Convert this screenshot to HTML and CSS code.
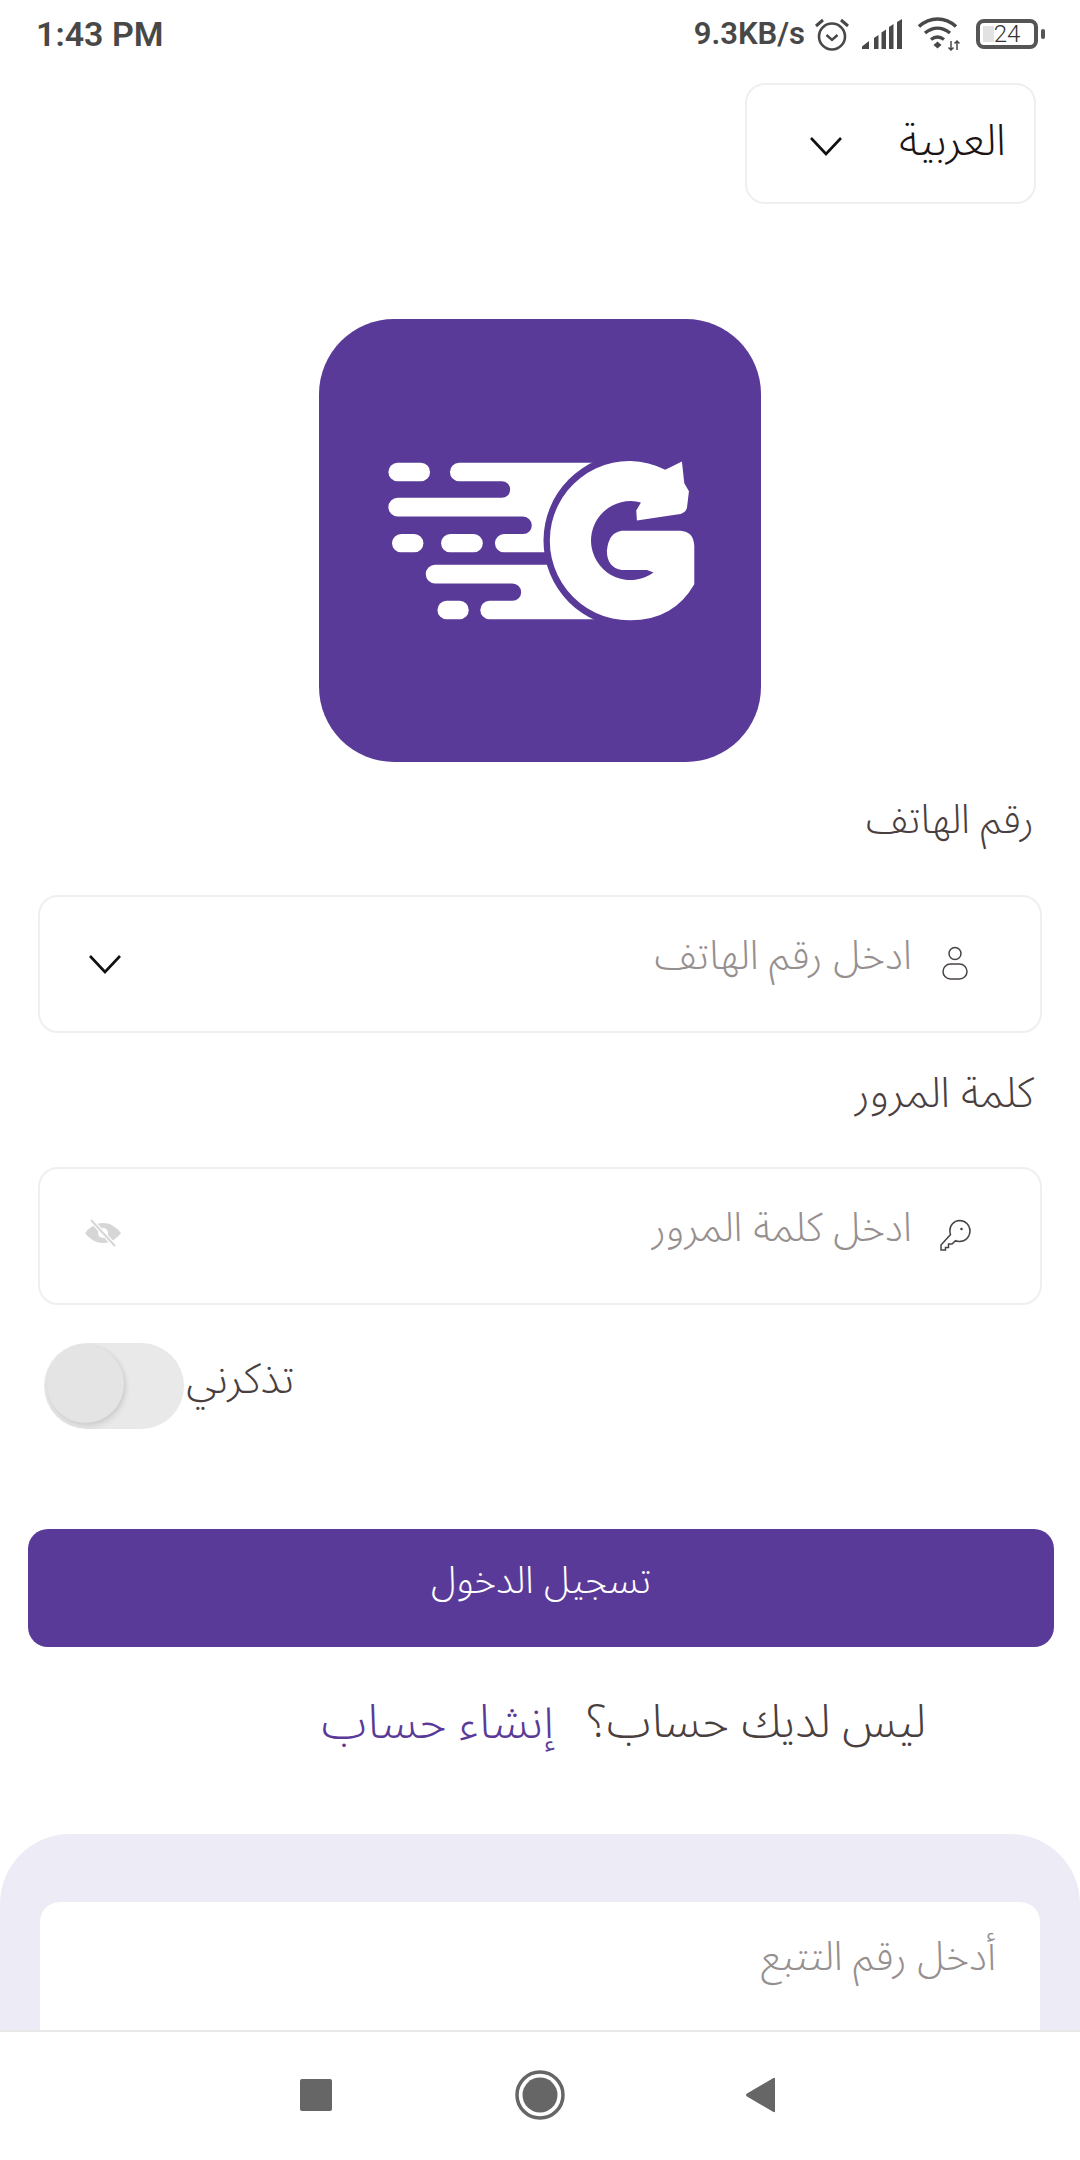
FILE: index.html
```html
<!DOCTYPE html>
<html lang="ar">
<head>
<meta charset="utf-8">
<title>تسجيل الدخول</title>
<link rel="stylesheet" href="styles.css">
</head>
<body>
<div class="screen">
  <header class="status">
    <span class="time">1:43 PM</span>
    <div class="status-right">
      <span class="speed">9.3KB/s</span>
      <svg class="ic-alarm" viewBox="0 0 36 34" fill="none" stroke="#484848"><circle cx="18" cy="19.500" r="13" stroke-width="2.600"/><path d="M12.500 18l5.500 5 5.500-5" stroke-width="2.400"/><path d="M2 9l7-6M34 9l-7-6" stroke-width="3"/></svg>
      <svg class="ic-signal" viewBox="0 0 40 30" fill="#484848"><path d="M0 30v-2.500l7-5.500v8zM12 30V19l4.500-3v14zM19.500 30V13.500l4.500-3V30zM27 30V8l4.500-3v25zM35 30V3l5-3v30z"/></svg>
      <svg class="ic-wifi" viewBox="0 0 42 34" fill="none" stroke="#484848" stroke-width="3.400"><path d="M1 9.500c11-10 26-10 37 0M7 16c8-6.500 17-6.500 25 0M13 22.500c4-3 9-3 13 0"/><path d="M15.500 28l4-3.500 4 3.500-4 3.500z" fill="#484848" stroke="none"/><path d="M33 24v9M30.500 30.500l2.500 2.500 2.500-2.500M39 33v-9M36.500 26.500l2.500-2.500 2.500 2.500" stroke-width="1.500"/></svg>
      <div class="battery"><span class="battery-box"><span class="battery-fill"></span><span class="battery-num">24</span></span><span class="battery-nub"></span></div>
    </div>
  </header>

  <main class="content">
    <div class="lang-row">
      <div class="lang-select">
        <span class="lang-name">العربية</span>
        <svg class="chev chev-lang" viewBox="0 0 34 20"><path d="M2 2l15 16L32 2"/></svg>
      </div>
    </div>

    <div class="logo-row">
      <svg class="logo" viewBox="57 57 1325 1325" preserveAspectRatio="none">
        <rect x="57" y="57" width="1325" height="1325" rx="225" fill="#5a3a98"/>
        <g fill="#fff">
          <rect x="265" y="487" width="125" height="55" rx="27.500"/>
          <rect x="276" y="700" width="94" height="55" rx="27.500"/>
          <rect x="423" y="700" width="125" height="55" rx="27.500"/>
          <rect x="412" y="900" width="94" height="55" rx="27.500"/>
          <path d="M477 487H900V955H568a27.500 27.500 0 0 1 0-55H637a26 26 0 0 0 0-52H405a28 28 0 0 1 0-56H760V755H612a27.500 27.500 0 0 1 0-55H669a26 26 0 0 0 0-52H293a28 28 0 0 1 0-56H605a25 25 0 0 0 0-50H477a27.500 27.500 0 0 1 0-55z"/>
        </g>
        <circle cx="990" cy="720" r="260" fill="#5a3a98"/>
        <path fill="#fff" d="M1182 735V850Q1120 958 990 958A238 238 0 1 1 1095 508L1145 483L1152 548L1166 572L1160 622Q1155 640 1130 642L1010 660L1008 630L1022 606A118 118 0 1 0 1060 815L1040 808H965Q920 800 920 750Q925 695 965 690H1140Q1180 692 1182 735Z"/>
      </svg>
    </div>

    <label class="label">رقم الهاتف</label>
    <div class="field">
      <svg class="field-icon icon-up" viewBox="0 0 28 34" fill="none" stroke="#4a4343" stroke-width="1.500"><circle cx="14" cy="7.500" r="6"/><rect x="2" y="18" width="24" height="15" rx="7.500"/></svg>
      <span class="placeholder">ادخل رقم الهاتف</span>
      <svg class="chev chev-field" viewBox="0 0 34 20"><path d="M2 2l15 16L32 2"/></svg>
    </div>

    <label class="label label-wide">كلمة المرور</label>
    <div class="field">
      <svg class="field-icon icon-up icon-key" viewBox="0 0 32 32" fill="none" stroke="#4a4343" stroke-width="1.500"><path d="M20 1.500a10.500 10.500 0 0 1 0 21c-1.500 0-3-.3-4-.9L12.500 25H9v3.500H6V31H1.500v-5L11 15.500c-.4-1-.6-2.300-.6-3.500A10 10 0 0 1 20 1.500z"/><circle cx="22" cy="10" r="1.300" fill="#4a4343" stroke="none"/></svg>
      <span class="placeholder">ادخل كلمة المرور</span>
      <svg class="eye" viewBox="0 0 36 28"><path d="M18 4C10 4 4 9 0 14c4 5 10 10 18 10s14-5 18-10c-4-5-10-10-18-10z" fill="#d6d6d6"/><circle cx="18" cy="14" r="5" fill="#fff"/><path d="M6 1l24 26" stroke="#fff" stroke-width="4.500"/><path d="M6 1l24 26" stroke="#d6d6d6" stroke-width="2"/></svg>
    </div>

    <div class="remember">
      <div class="toggle"><span class="knob"></span></div>
      <span class="remember-text">تذكرني</span>
    </div>

    <button class="login" type="button">تسجيل الدخول</button>

    <div class="signup">
      <span class="signup-q">ليس لديك حساب؟</span>
      <a class="signup-link">إنشاء حساب</a>
    </div>

    <section class="track">
      <div class="track-card"><span class="placeholder">أدخل رقم التتبع</span></div>
    </section>
  </main>

  <nav class="navbar">
    <span class="nav-square"></span>
    <svg class="nav-circle" viewBox="0 0 50 50"><circle cx="25" cy="25" r="23" fill="none" stroke="#666" stroke-width="3.500"/><circle cx="25" cy="25" r="17.500" fill="#666"/></svg>
    <svg class="nav-back" viewBox="0 0 32 36"><path d="M30 2v32q0 2-2 .8L2 19.500q-2-1.500 0-3L28 1.200q2-1.200 2 .8z" fill="#666"/></svg>
  </nav>
</div>
</body>
</html>
```

FILE: styles.css
```css
* { box-sizing: border-box; }
html, body { margin: 0; padding: 0; background: #fff; }
body { font-family: "Noto Sans Arabic", "Noto Sans", "DejaVu Sans", sans-serif; }
.screen { width: 1080px; height: 2160px; display: flex; flex-direction: column; overflow: hidden; }

.status { height: 83px; flex: none; display: flex; align-items: flex-start; justify-content: space-between; padding: 13px 35px 0 36px; color: #484848; font-family: Roboto, sans-serif; font-weight: 600; }
.time { font-size: 34px; line-height: 42px; }
.status-right { display: flex; align-items: center; height: 42px; }
.speed { font-size: 31px; line-height: 42px; }
.ic-alarm { width: 36px; height: 34px; margin-left: 9px; }
.ic-signal { width: 40px; height: 30px; margin-left: 12px; }
.ic-wifi { width: 42px; height: 34px; margin-left: 16px; }
.battery { display: flex; align-items: center; margin-left: 16px; }
.battery-box { position: relative; width: 62px; height: 30px; border: 4px solid #555; border-radius: 8px; display: flex; align-items: center; justify-content: center; }
.battery-fill { position: absolute; left: 3px; top: 3px; bottom: 3px; width: 11px; background: #e2e2e2; }
.battery-num { position: relative; font-size: 24px; font-weight: 300; color: #333; }
.battery-nub { width: 4px; height: 10px; margin-left: 3px; background: #555; border-radius: 2px; }

.content { flex: 1; min-height: 0; overflow: hidden; display: flex; flex-direction: column; }
.chev { fill: none; stroke: #111; stroke-width: 2.600; }
.lang-row { display: flex; justify-content: flex-end; padding-right: 44px; }
.lang-select { width: 291px; height: 121px; border: 2px solid #efefef; border-radius: 20px; display: flex; align-items: center; justify-content: space-between; padding: 0 28px 0 62px; flex-direction: row-reverse; }
.lang-name { font-size: 44px; font-weight: 300; color: #1c1414; line-height: 1; margin-top: -5px; }
.chev-lang { width: 34px; height: 20px; margin-top: 5px; }
.logo-row { display: flex; justify-content: center; margin-top: 115px; }
.logo { width: 442px; height: 443px; display: block; }

.label { display: flex; align-items: center; justify-content: flex-end; height: 133px; padding: 0 46px 16px 0; font-size: 40px; color: #4a3f3f; font-weight: 300; }
.label-wide { font-size: 42px; height: 134px; padding-bottom: 14px; }
.field { height: 138px; margin: 0 38px; border: 2px solid #efefef; border-radius: 20px; display: flex; flex-direction: row-reverse; align-items: center; padding: 0 70px 0 48px; position: relative; }
.field-icon { width: 30px; height: 34px; margin-left: 28px; }
.icon-up { margin-top: -3px; }
.icon-key { width: 33px; height: 32px; margin-right: -2px; margin-left: 27px; }
.placeholder { font-size: 40px; line-height: 1.2; color: #968f8f; font-weight: 300; margin-top: -15px; }
.chev-field { width: 34px; height: 20px; margin-right: auto; margin-top: -1px; }
.eye { width: 36px; height: 28px; margin-right: auto; margin-left: -3px; margin-top: -6px; }

.remember { display: flex; align-items: center; height: 86px; margin-top: 38px; padding-left: 44px; }
.toggle { width: 140px; height: 86px; border-radius: 43px; background: #e9e9e9; position: relative; overflow: hidden; }
.knob { position: absolute; left: 3px; top: 2px; width: 77px; height: 78px; border-radius: 50%; background: #e4e4e4; box-shadow: 1px 4px 6px rgba(0,0,0,.10), 2px 0 4px rgba(0,0,0,.05); }
.remember-text { font-size: 42px; font-weight: 300; color: #4a3f3f; margin-left: 2px; margin-top: -14px; }

.login { margin: 100px 26px 0 28px; height: 118px; flex: none; border: 0; border-radius: 20px; background: #5a3a98; color: #fff; font: inherit; font-size: 38px; font-weight: 300; padding: 0 0 14px; }

.signup { height: 187px; flex: none; display: flex; align-items: center; justify-content: center; flex-direction: row-reverse; gap: 33px; padding: 0 0 36px 167px; font-size: 46px; font-weight: 300; }
.signup-q { color: #4a3f3f; }
.signup-link { color: #5a3a98; font-size: 47px; }

.track { flex: 1; min-height: 0; background: #edebf5; border-radius: 70px 70px 0 0; padding: 68px 40px 0; }
.track-card { height: 200px; background: #fff; border-radius: 20px; display: flex; justify-content: flex-end; padding: 47px 44px 0 0; }

.navbar { height: 130px; flex: none; background: #fff; border-top: 2px solid #e8e8e8; display: flex; align-items: center; padding-bottom: 2px; }
.nav-square { width: 32px; height: 32px; border-radius: 2px; background: #666; margin-left: 300px; }
.nav-circle { width: 50px; height: 50px; margin-left: 183px; }
.nav-back { width: 32px; height: 36px; margin-left: 180px; }
```
